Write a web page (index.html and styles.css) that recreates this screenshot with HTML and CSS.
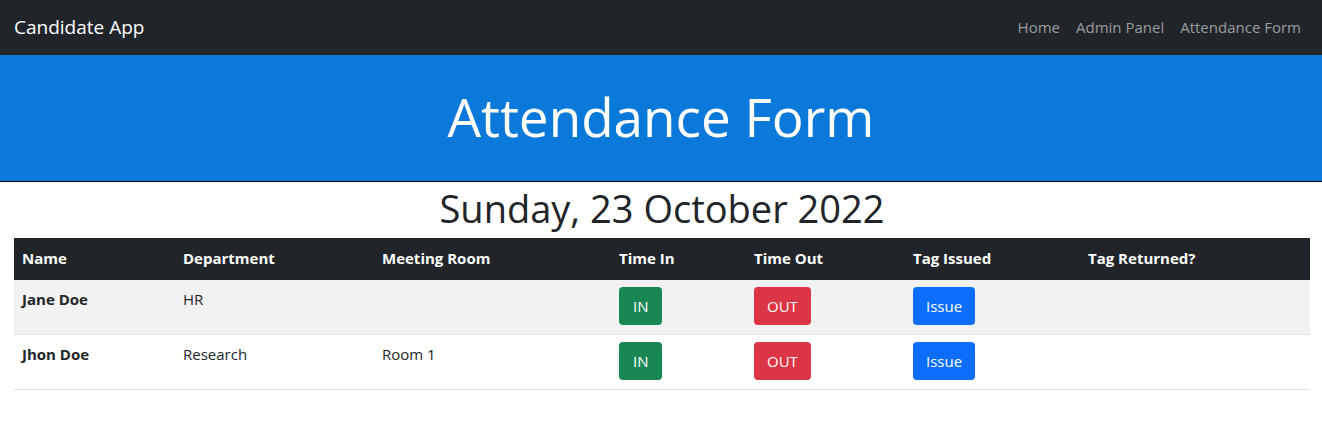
FILE: index.html
```html
<!DOCTYPE html>
<html lang="en">
<head>
<meta charset="utf-8">
<title>Candidate App</title>
<link rel="stylesheet" href="styles.css">
</head>
<body>
<nav class="navbar">
  <a class="brand" href="#">Candidate App</a>
  <ul class="nav">
    <li><a class="nav-link" href="#">Home</a></li>
    <li><a class="nav-link" href="#">Admin Panel</a></li>
    <li><a class="nav-link" href="#">Attendance Form</a></li>
  </ul>
</nav>
<header class="hero">
  <h1 class="hero-title">Attendance Form</h1>
</header>
<main class="content">
  <h2 class="date">Sunday, 23 October 2022</h2>
  <table class="table">
    <colgroup>
      <col class="c1"><col class="c2"><col class="c3"><col class="c4"><col class="c5"><col class="c6"><col class="c7">
    </colgroup>
    <thead>
      <tr>
        <th>Name</th><th>Department</th><th>Meeting Room</th><th>Time In</th><th>Time Out</th><th>Tag Issued</th><th>Tag Returned?</th>
      </tr>
    </thead>
    <tbody>
      <tr class="striped">
        <th>Jane Doe</th><td>HR</td><td></td>
        <td><button class="btn btn-success">IN</button></td>
        <td><button class="btn btn-danger">OUT</button></td>
        <td><button class="btn btn-primary">Issue</button></td>
        <td></td>
      </tr>
      <tr>
        <th>Jhon Doe</th><td>Research</td><td>Room 1</td>
        <td><button class="btn btn-success">IN</button></td>
        <td><button class="btn btn-danger">OUT</button></td>
        <td><button class="btn btn-primary">Issue</button></td>
        <td></td>
      </tr>
    </tbody>
  </table>
</main>
</body>
</html>
```
FILE: styles.css
```css
* { box-sizing: border-box; }
body {
  margin: 0;
  font-family: "Open Sans", "Noto Sans", sans-serif;
  font-size: 15px;
  line-height: 1.5;
  color: #212529;
  background: #fff;
}
.navbar {
  height: 55px;
  background: #212529;
  display: flex;
  align-items: center;
  justify-content: space-between;
  padding: 0 13px 0 14px;
}
.brand {
  color: #fff;
  text-decoration: none;
  font-size: 19px;
}
.nav {
  display: flex;
  list-style: none;
  margin: 0;
  padding: 0;
}
.nav-link {
  display: block;
  padding: 8px 8px;
  color: rgba(255,255,255,.55);
  text-decoration: none;
}
.hero {
  background: #0a79d9;
  border-bottom: 1px solid #000;
  height: 127px;
  display: flex;
  align-items: center;
  justify-content: center;
}
.hero-title {
  margin: 0;
  color: #fff;
  font-weight: 400;
  font-size: 53px;
  line-height: 1.2;
  padding-bottom: 2px;
}
.content {
  padding: 0 12px 0 14px;
}
.date {
  margin: 0 0 8px;
  text-align: center;
  font-weight: 400;
  font-size: 38px;
  line-height: 48px;
  padding-top: 2px;
}
.table {
  width: 100%;
  border-collapse: collapse;
  table-layout: fixed;
  margin-top: -2px;
}
.c1 { width: 161px; }
.c2 { width: 199px; }
.c3 { width: 237px; }
.c4 { width: 135px; }
.c5 { width: 159px; }
.c6 { width: 175px; }
.table th, .table td {
  text-align: left;
  vertical-align: top;
  padding: 8px;
  border-bottom: 1px solid #dee2e6;
}
.table thead th {
  background: #212529;
  color: #fff;
  font-weight: 700;
  height: 42px;
  padding: 9px 8px;
  border-bottom: 0;
}
.table tbody th { font-weight: 700; }
.table tbody tr { height: 54px; }
.table tbody tr + tr { height: 55px; }
.striped th, .striped td { background: #f2f2f2; }
.btn {
  font-family: inherit;
  font-size: 15px;
  line-height: 24px;
  padding: 6px 12px;
  border: 1px solid transparent;
  border-radius: 4px;
  color: #fff;
  cursor: pointer;
  margin-top: -1px;
}
.btn-success { background: #198754; padding: 6px 13px; }
.btn-danger { background: #dc3545; }
.btn-primary { background: #0d6efd; }
```
